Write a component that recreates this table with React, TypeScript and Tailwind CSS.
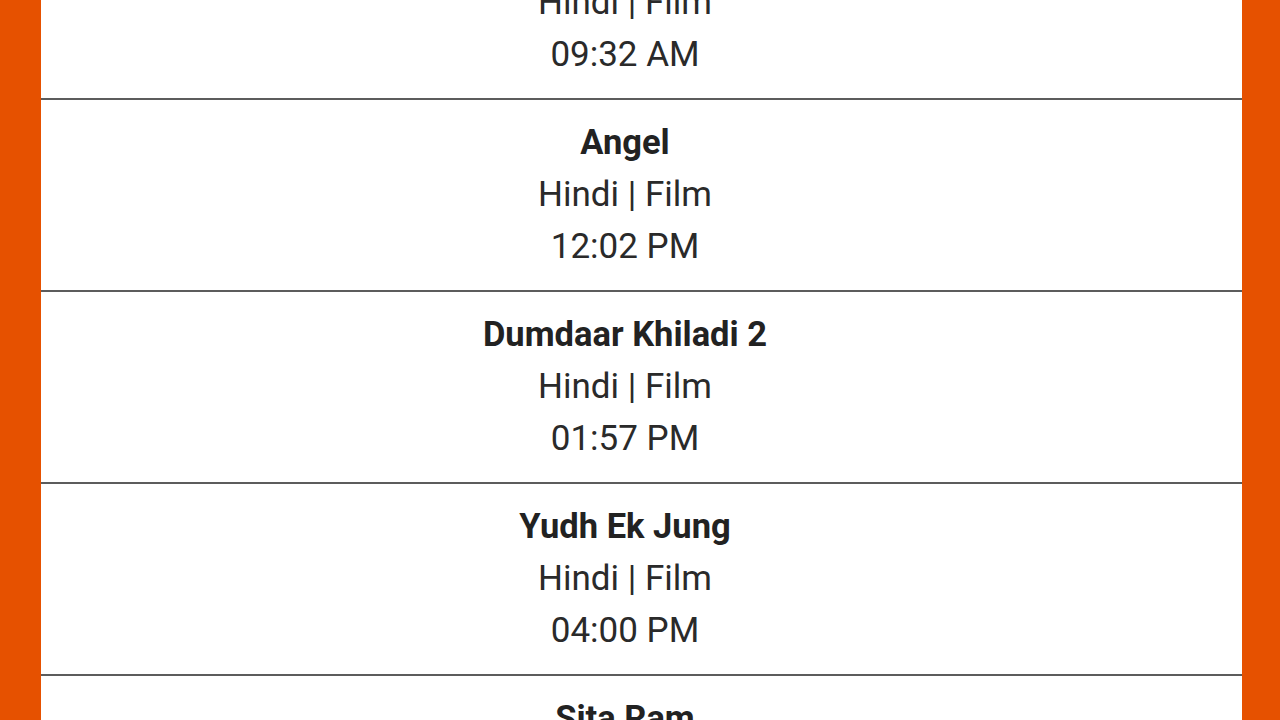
const shows = [
  { title: 'Phir Bhi Dil Hai Hindustani', lang: 'Hindi', type: 'Film', time: '09:32 AM' },
  { title: 'Angel', lang: 'Hindi', type: 'Film', time: '12:02 PM' },
  { title: 'Dumdaar Khiladi 2', lang: 'Hindi', type: 'Film', time: '01:57 PM' },
  { title: 'Yudh Ek Jung', lang: 'Hindi', type: 'Film', time: '04:00 PM' },
  { title: 'Sita Ram', lang: 'Hindi', type: 'Film', time: '06:30 PM' },
];

export default function App() {
  return (
    <div className="flex h-screen w-full overflow-hidden bg-[#e65100]" style={{ fontFamily: 'Roboto, "Noto Sans", sans-serif' }}>
      <div className="w-[41px] shrink-0" />
      <div className="flex-1 bg-white">
        <div className="-mt-[92px]">
          {shows.map((s) => (
            <div
              key={s.title}
              className="flex flex-col items-center border-b-2 border-[#5c5c5c] pt-[16px] pb-[17px] pr-[33px] text-[#222]"
            >
              <div className="h-[53px] leading-[52px] text-[34.5px] font-bold">{s.title}</div>
              <div className="h-[52px] leading-[52px] text-[35px] text-[#2a2a2a]">
                {s.lang} | {s.type}
              </div>
              <div className="h-[52px] leading-[52px] text-[35px] text-[#2a2a2a]">{s.time}</div>
            </div>
          ))}
        </div>
      </div>
      <div className="w-[38px] shrink-0" />
    </div>
  );
}
